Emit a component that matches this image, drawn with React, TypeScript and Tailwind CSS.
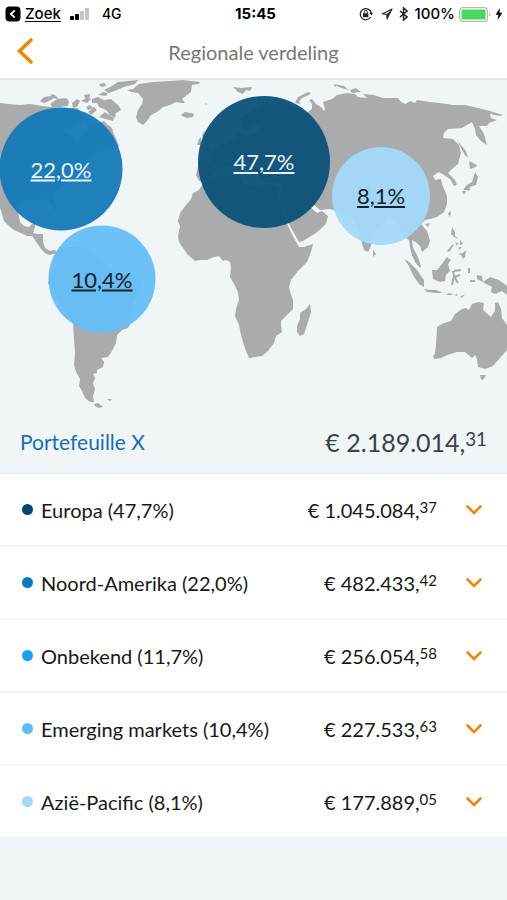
import { useState } from "react";

interface Region {
  id: string;
  name: string;
  share: string;
  euros: string;
  cents: string;
  dot: string;
}

interface Bubble {
  region: string;
  share: string;
  x: number;
  y: number;
  className: string;
}

const MAP_WIDTH = 507;
const MAP_HEIGHT = 332;

const regions: Region[] = [
  { id: "europa", name: "Europa", share: "47,7%", euros: "1.045.084", cents: "37", dot: "bg-[#00456e]" },
  { id: "noord-amerika", name: "Noord-Amerika", share: "22,0%", euros: "482.433", cents: "42", dot: "bg-[#0a7abf]" },
  { id: "onbekend", name: "Onbekend", share: "11,7%", euros: "256.054", cents: "58", dot: "bg-[#1c9fee]" },
  { id: "emerging-markets", name: "Emerging markets", share: "10,4%", euros: "227.533", cents: "63", dot: "bg-[#5fbcf5]" },
  { id: "azie-pacific", name: "Azië-Pacific", share: "8,1%", euros: "177.889", cents: "05", dot: "bg-[#a5d8f7]" },
];

// x and y are the centre of the bubble in map units
const bubbles: Bubble[] = [
  { region: "noord-amerika", share: "22,0%", x: 61, y: 89, className: "size-[123px] bg-[#1479b8]/95 text-[#e9f5fc]" },
  { region: "europa", share: "47,7%", x: 264, y: 82, className: "size-[132px] bg-[#0c5078]/95 text-[#e9f5fc]" },
  { region: "azie-pacific", share: "8,1%", x: 381, y: 116, className: "size-[98px] bg-[#a3d8f9]/95 text-[#12222c]" },
  { region: "emerging-markets", share: "10,4%", x: 102, y: 199, className: "size-[107px] bg-[#64bef6]/95 text-[#12222c]" },
];

const StatusBar = () => (
  <div className="grid grid-cols-3 items-center h-7 px-1 font-['Inter',sans-serif] text-[14px] leading-5 font-semibold text-black">
    <div className="flex items-center">
      <svg viewBox="0 0 16 16" className="size-4 ml-px mr-1" aria-hidden="true">
        <rect x="0.5" y="0.5" width="15" height="15" rx="4" fill="#000" />
        <path d="M9.8 4.4 5.8 8l4 3.6" fill="none" stroke="#fff" strokeWidth="1.8" />
      </svg>
      <a href="#zoek" className="text-[15px] font-medium underline underline-offset-2">
        Zoek
      </a>
      <svg viewBox="0 0 21 12" className="w-[21px] h-3 ml-2 mr-3" aria-label="Signaal">
        <rect x="1" y="8" width="4" height="4" rx="1" fill="#000" />
        <rect x="6" y="6" width="4" height="6" rx="1" fill="#000" />
        <rect x="11" y="3" width="4" height="9" rx="1" fill="#c4c4c4" />
        <rect x="16" y="0" width="4" height="12" rx="1" fill="#c4c4c4" />
      </svg>
      <span className="font-medium">4G</span>
    </div>
    <div className="text-center text-[15px] font-bold pl-1">15:45</div>
    <div className="flex items-center justify-end">
      <svg viewBox="0 0 14 14" className="size-[14px] shrink-0 mr-2" aria-hidden="true">
        <path d="M11.7 10A5.6 5.6 0 1 1 12.3 6" fill="none" stroke="#222" strokeWidth="1.2" />
        <path d="m10.4 6 3.6-.2-1.6 2.6z" fill="#222" />
        <rect x="4" y="6.3" width="5.4" height="4" rx="0.6" fill="#222" />
        <path d="M5.1 6.5V5a1.6 1.6 0 0 1 3.2 0v1.5" fill="none" stroke="#222" strokeWidth="1" />
      </svg>
      <svg viewBox="0 0 12 12" className="size-3 shrink-0 mr-1.5" aria-hidden="true">
        <path d="M11 1 1.2 5.9l4.5.4.4 4.6z" fill="none" stroke="#333" strokeWidth="1.1" strokeLinejoin="round" />
        <path d="M11 1 5.7 6.3l.4 4.6z" fill="#333" />
      </svg>
      <svg viewBox="0 0 9 14" className="w-[9px] h-[14px] shrink-0 mr-1.5" aria-hidden="true">
        <path d="m1 4 7 6-3.5 3V1L8 4l-7 6" fill="none" stroke="#222" strokeWidth="1.5" />
      </svg>
      <span className="font-medium text-[15px]">100%</span>
      <svg viewBox="0 0 32 15" className="w-8 h-[15px] shrink-0 ml-1 mr-1" aria-hidden="true">
        <rect x="0.7" y="0.7" width="27.6" height="13.6" rx="3" fill="#fff" stroke="#b5b5b5" strokeWidth="1.2" />
        <rect x="2.5" y="2.5" width="24" height="10" rx="1" fill="#48d85f" />
        <path d="M30 5.3c1.5.8 1.5 3.6 0 4.4z" fill="#b5b5b5" />
      </svg>
      <svg viewBox="0 0 8 12" className="w-2 h-3 shrink-0" aria-hidden="true">
        <path d="M5 0 .6 6.7h2.8L2.6 12 7.4 4.8H4.5z" fill="#000" />
      </svg>
    </div>
  </div>
);

const WorldMap = () => (
  <svg viewBox="0 80 507 332" className="block w-full" fill="#a9abad" aria-hidden="true">
    {/* North and Central America */}
    <path
      fillRule="evenodd"
      d="M0 103 8 104 20 105 30 104 43 106 60 108 78 108 84 116 88 123 96 124 104 121 108 125 110 126 114 134 117 141 119 146 108 149 97 150 88 158 82 166 75 173 70 180 62 186 55 192 53 198 57 206 55 211 50 203 47 198 37 199 28 200 21 203 18 212 20 222 24 226 29 227 32 224 36 222 35 227 33 233 37 234 43 234 43 242 45 248 50 251 55 250 57 253 53 254 49 255 45 253 41 249 37 243 32 236 27 236 21 233 14 230 9 226 4 221 2 214 0 208ZM62 128 70 129 77 125 85 119 90 122 88 130 82 135 78 143 75 144 73 137 66 134Z"
    />
    {/* Canadian Arctic */}
    <path d="M40 101 44 97 51 96 54 98 49 101 44 103ZM50 104 57 99 66 98 69 101 68 106 60 107 52 107ZM72 103 77 99 80 101 77 107 73 108ZM81 101 88 97 91 99 87 103ZM92 99 98 97 104 100 111 99 119 106 121 110 116 113 115 118 110 115 106 110 99 107 97 103 92 103ZM99 117 105 112 114 118 113 121 105 119ZM88 112 94 107 97 110 91 115ZM98 95 103 92 108 93 106 96ZM99 84 105 83 106 86 101 87ZM104 90 112 86 118 82 138 80 135 84 124 87 117 90 109 93ZM84 95 90 94 90 97 85 98Z" />
    <path d="M50 94 55 95 59 99 53 98ZM86 107 90 105 93 108 88 110ZM110 126 113 130 111 133Z" />
    {/* Greenland, Iceland, Svalbard */}
    <path d="M127 90 133 89 139 84 153 82 170 81 183 80 200 82 199 84 192 85 191 92 187 95 182 99 185 103 181 103 176 102 170 105 163 107 157 112 151 115 147 121 143 125 138 122 136 117 138 110 142 104 143 99 138 93 131 92Z" />
    <path d="M181 115 185 112 191 113 194 114 193 117 187 118 184 117ZM233 87 241 88 252 87 250 91 246 90 243 94 238 92ZM205 103 207 104 206 105Z" />
    {/* South America */}
    <path d="M55 253 60 249 67 247 77 247 87 248 94 255 103 260 107 267 116 272 127 274 138 279 142 285 140 293 134 302 133 313 131 323 128 328 122 330 117 335 116 343 112 351 108 357 101 358 104 362 103 367 97 370 97 373 93 374 95 378 93 383 95 389 93 396 94 402 90 402 85 398 82 391 79 386 80 379 76 372 74 365 75 353 74 339 73 323 67 313 57 299 48 283 50 276 54 268ZM94 404 98 403 103 407 99 408 95 406ZM107 399 112 399 110 401Z" />
    {/* Africa */}
    <path d="M202 185 207 180 221 176 240 175 241 182 248 185 258 188 266 185 280 188 277 196 284 215 288 226 294 238 299 247 304 247 313 244 311 252 307 262 298 271 291 280 289 287 291 295 293 300 293 309 287 315 281 321 281 325 282 332 276 336 274 343 268 351 262 356 256 357 249 358 246 351 243 342 241 335 239 325 235 316 236 309 239 300 238 292 234 284 230 277 231 267 230 262 226 260 223 261 219 256 214 257 207 260 200 260 195 261 188 255 183 248 179 242 178 237 180 226 178 221 180 213 186 205 191 199 193 193 199 190Z" />
    <path d="M310 304 311 312 307 325 304 334 300 336 297 332 297 326 300 319 300 313 306 309Z" />
    {/* Europe and Asia */}
    <path d="M196 175 198 166 199 161 211 162 214 157 210 151 221 146 229 141 234 138 237 131 244 136 255 134 262 128 265 120 254 126 247 131 241 127 240 120 253 108 267 102 282 101 295 106 303 111 300 116 306 113 312 109 312 104 309 100 312 99 316 104 321 107 324 111 325 109 323 102 332 99 337 95 347 93 355 94 358 97 367 98 363 94 374 95 383 98 390 98 398 98 401 102 405 104 410 101 415 103 417 100 430 102 440 103 453 105 465 105 478 108 490 111 503 115 500 116 490 114 491 118 497 120 489 123 487 126 479 126 484 134 487 145 481 141 476 135 475 129 472 122 467 125 462 128 448 129 444 133 443 138 453 139 459 145 461 153 458 164 452 169 448 173 455 180 457 185 454 186 450 179 444 175 439 172 433 176 435 180 441 179 442 184 447 196 447 204 444 212 437 217 430 219 425 220 421 224 427 231 430 241 428 247 422 252 420 246 417 243 412 240 413 248 418 257 421 266 420 268 415 262 412 255 410 247 409 240 403 236 398 222 389 216 380 226 372 235 371 246 368 252 364 250 361 240 357 227 351 217 342 213 330 209 320 210 314 205 310 207 317 213 322 211 328 216 326 224 316 233 303 241 299 242 291 228 283 210 279 201 282 189 278 181 266 182 258 177 263 170 255 176 246 167 241 167 249 180 236 166 225 166 216 170 207 181 199 181Z" />
    <path d="M200 149 211 152 208 146 211 137 205 131 202 135 205 143ZM199 139 201 137 201 145 197 145ZM295 103 298 97 308 92 311 93 309 95 302 98 299 102 301 104ZM333 84 344 86 349 90 341 88ZM350 90 356 88 361 92 352 93ZM334 85 337 85 335 87Z" />
    {/* Japan and Sakhalin */}
    <path d="M457 140 460 144 466 151 468 158 465 155 461 148ZM469 161 477 165 476 167 470 169ZM475 172 478 177 476 185 470 187 469 190 463 190 467 185 472 182ZM462 191 466 191 464 195ZM467 189 471 189 468 191ZM450 211 451 213 450 217 448 214ZM425 224 430 223 428 227Z" />
    {/* Indonesia and the Philippines */}
    <path d="M373 250 376 254 373 257ZM404 259 409 262 417 270 424 280 424 287 419 284 413 275 409 266ZM424 289 431 290 436 290 443 293 437 293 427 292ZM432 270 437 270 441 265 447 257 451 260 448 264 450 271 446 275 445 281 440 282 433 279ZM452 227 455 232 455 236 459 239 454 237 451 234ZM447 251 453 244 454 245 449 252ZM458 254 463 253 466 250 465 257 463 259 461 255ZM455 242 458 243 457 246ZM460 240 463 244 460 245ZM459 247 462 247 459 250ZM446 294 450 293 453 295 448 295ZM454 295 458 294 457 296ZM460 297 465 294 462 298Z" />
    <path d="M453 271 454 276 452 285M454 271 461 270M454 277 460 275M455 278 458 283M469 268 469 273M470 281 475 281" fill="none" stroke="#a9abad" strokeWidth="2" />
    <path d="M477 275 482 276 483 282 490 277 499 280 507 286 507 295 502 291 495 294 491 292 492 287 486 284 481 281 477 279Z" />
    {/* Australia and Tasmania */}
    <path d="M437 327 444 323 451 321 455 314 462 309 466 308 469 310 472 304 478 302 484 303 483 310 491 317 495 311 495 303 498 302 501 309 502 318 507 325 507 350 499 359 493 366 488 368 485 369 478 367 477 359 475 355 472 358 465 352 457 352 447 355 441 358 434 359 433 356 435 354 436 345ZM480 375 486 375 483 380 481 379Z" />
  </svg>
);

const Amount = ({ euros, cents }: { euros: string; cents: string }) => (
  <span className="whitespace-nowrap">
    € {euros},<sup className="text-[75%] top-[-0.3em]">{cents}</sup>
  </span>
);

const App = () => {
  const [openRegion, setOpenRegion] = useState<string | null>(null);

  return (
    <div className="min-h-screen bg-[#f0f6f7] font-['Lato',sans-serif] text-[#171717]">
      <header className="bg-white border-b-2 border-[#e3e5e6]">
        <StatusBar />
        <div className="grid grid-cols-[48px_1fr_48px] items-center h-[50px]">
          <button type="button" aria-label="Terug" className="flex items-center h-full pl-4 pb-1">
            <svg viewBox="0 0 18 28" className="w-[18px] h-7" aria-hidden="true">
              <path d="M15 3 3.5 14 15 25" fill="none" stroke="#e8870c" strokeWidth="3.6" strokeLinecap="round" />
            </svg>
          </button>
          <h1 className="text-center text-[20px] leading-6 pb-0.5 text-[#777]">Regionale verdeling</h1>
        </div>
      </header>

      <main>
        <section className="relative overflow-hidden" aria-label="Wereldkaart">
          <WorldMap />
          {bubbles.map((bubble) => (
            <a
              key={bubble.region}
              href={`#${bubble.region}`}
              className={`absolute flex items-center justify-center -translate-1/2 rounded-full text-[22px] leading-7 underline decoration-2 underline-offset-2 ${bubble.className}`}
              style={{
                left: `${(bubble.x / MAP_WIDTH) * 100}%`,
                top: `${(bubble.y / MAP_HEIGHT) * 100}%`,
              }}
            >
              {bubble.share}
            </a>
          ))}
        </section>

        <div className="flex items-center justify-between h-[62px] px-5 pb-0.5 border-b border-[#e9edee]">
          <h2 className="text-[21px] leading-7 text-[#1a6fae]">Portefeuille X</h2>
          <div className="text-[25px] leading-7 text-[#3c4246]">
            <Amount euros="2.189.014" cents="31" />
          </div>
        </div>

        <ul className="bg-white">
          {regions.map((region) => (
            <li key={region.id} id={region.id} className="border-b-2 border-[#f4f5f5] last:border-b-0">
              <button
                type="button"
                aria-expanded={openRegion === region.id}
                onClick={() => setOpenRegion(openRegion === region.id ? null : region.id)}
                className="flex items-center w-full h-[71px] pl-[22px] pr-6 text-left text-[20px] leading-6"
              >
                <span className={`size-[11px] rounded-full mr-2 ${region.dot}`} />
                <span className="flex-1">
                  {region.name} ({region.share})
                </span>
                <Amount euros={region.euros} cents={region.cents} />
                <svg viewBox="0 0 18 12" className="w-[18px] h-3 ml-7" aria-hidden="true">
                  <path d="m2.5 2.5 6.5 6.5 6.5-6.5" fill="none" stroke="#e8870c" strokeWidth="2.6" strokeLinecap="round" />
                </svg>
              </button>
            </li>
          ))}
        </ul>
      </main>
    </div>
  );
};

export default App;
